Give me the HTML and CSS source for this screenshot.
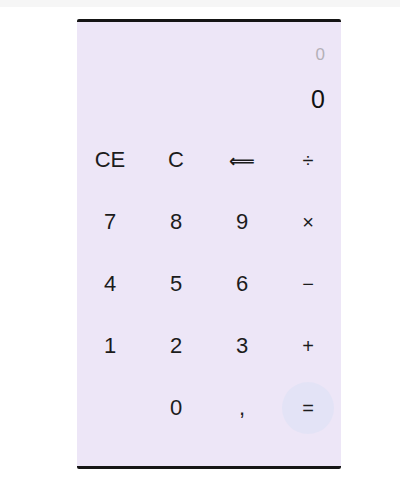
FILE: index.html
```html
<!DOCTYPE html>
<html>
<head>
<meta charset="utf-8">
<link rel="stylesheet" href="styles.css">
</head>
<body>
<div class="topbar"></div>
<div class="calc">
  <div class="display">
    <div class="expr">0</div>
    <div class="value">0</div>
  </div>
  <div class="keys">
    <div class="key">CE</div>
    <div class="key">C</div>
    <div class="key arrow">⟸</div>
    <div class="key op">÷</div>
    <div class="key">7</div>
    <div class="key">8</div>
    <div class="key">9</div>
    <div class="key op">×</div>
    <div class="key">4</div>
    <div class="key">5</div>
    <div class="key">6</div>
    <div class="key op">−</div>
    <div class="key">1</div>
    <div class="key">2</div>
    <div class="key">3</div>
    <div class="key op">+</div>
    <div class="key empty"></div>
    <div class="key">0</div>
    <div class="key">,</div>
    <div class="key eq">=</div>
  </div>
</div>
</body>
</html>
```

FILE: styles.css
```css
html, body {
  margin: 0;
  padding: 0;
  background: #ffffff;
  font-family: "Liberation Sans", Arial, sans-serif;
}
.topbar {
  height: 7px;
  background: #f6f6f6;
}
.calc {
  margin: 12px 0 0 77px;
  width: 264px;
  background: #ede6f7;
  border-top: 3px solid #151515;
  border-bottom: 3px solid #151515;
  border-radius: 2px;
  box-sizing: border-box;
}
.display {
  display: flex;
  flex-direction: column;
  align-items: flex-end;
  padding: 23px 16px 15px 16px;
}
.expr {
  font-size: 17px;
  line-height: 20px;
  color: #b4b0b8;
}
.value {
  margin-top: 19px;
  font-size: 25px;
  line-height: 30px;
  color: #111;
}
.keys {
  display: grid;
  grid-template-columns: repeat(4, 66px);
  grid-auto-rows: 62px;
  padding-bottom: 27px;
}
.key {
  display: flex;
  align-items: center;
  justify-content: center;
  font-size: 22px;
  color: #1c1c1c;
}
.arrow {
  font-family: "DejaVu Sans", sans-serif;
  font-size: 18px;
  font-weight: bold;
}
.op {
  font-size: 20px;
}
.eq {
  width: 52px;
  height: 52px;
  margin: auto;
  border-radius: 50%;
  background: #e3e3f6;
  font-size: 20px;
}
```
